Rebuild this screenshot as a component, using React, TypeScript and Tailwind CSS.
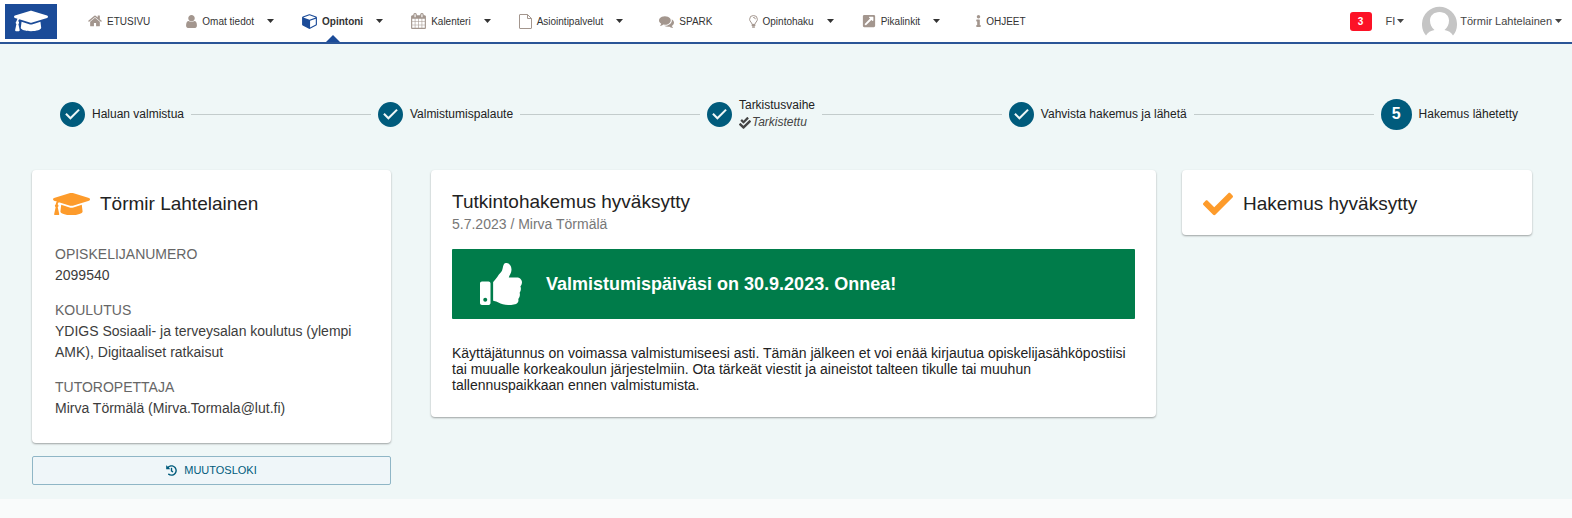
import type { ReactNode } from 'react';
import clsx from 'clsx';
import {
  FaCheck,
  FaCheckDouble,
  FaExternalLinkSquareAlt,
  FaGraduationCap,
  FaHistory,
  FaInfo,
  FaThumbsUp
} from 'react-icons/fa';

type NavItem = {
  label: string;
  icon: ReactNode;
  menu?: boolean;
  active?: boolean;
};

type Step = {
  label: string;
  done: boolean;
  note?: string;
};

const iconPaths = {
  home: 'M1408 992v480q0 26-19 45t-45 19h-384v-384h-256v384h-384q-26 0-45-19t-19-45v-480q0-1 .5-3t.5-3l575-474 575 474q1 2 1 6zm223-69l-62 74q-8 9-21 11h-3q-13 0-21-7l-692-577-692 577q-12 8-24 7-13-2-21-11l-62-74q-8-10-7-23.5t11-21.5l719-599q32-26 76-26t76 26l244 204v-195q0-14 9-23t23-9h192q14 0 23 9t9 23v408l219 182q10 8 11 21.5t-7 23.5z',
  user: 'M1536 1399q0 109-62.5 187t-150.5 78h-854q-88 0-150.5-78t-62.5-187q0-85 8.5-160.5t31.5-152 58.5-131 94-89 134.5-34.5q131 128 313 128t313-128q76 0 134.5 34.5t94 89 58.5 131 31.5 152 8.5 160.5zm-256-887q0 159-112.5 271.5t-271.5 112.5-271.5-112.5-112.5-271.5 112.5-271.5 271.5-112.5 271.5 112.5 112.5 271.5z',
  cube: 'M896 1629l640-349v-636l-640 233v752zm-64-865l698-254-698-254-698 254zm832-252v768q0 35-18 65t-49 47l-704 384q-28 16-61 16t-61-16l-704-384q-31-17-49-47t-18-65v-768q0-40 23-73t61-47l704-256q22-8 44-8t44 8l704 256q38 14 61 47t23 73z',
  calendar:
    'M192 1664h288v-288h-288v288zm352 0h320v-288h-320v288zm-352-352h288v-320h-288v320zm352 0h320v-320h-320v320zm-352-384h288v-288h-288v288zm736 736h320v-288h-320v288zm-384-736h320v-288h-320v288zm768 736h288v-288h-288v288zm-384-352h320v-320h-320v320zm-352-864v-288q0-13-9.5-22.5t-22.5-9.5h-64q-13 0-22.5 9.5t-9.5 22.5v288q0 13 9.5 22.5t22.5 9.5h64q13 0 22.5-9.5t9.5-22.5zm736 864h288v-320h-288v320zm-384-384h320v-288h-320v288zm384 0h288v-288h-288v288zm32-480v-288q0-13-9.5-22.5t-22.5-9.5h-64q-13 0-22.5 9.5t-9.5 22.5v288q0 13 9.5 22.5t22.5 9.5h64q13 0 22.5-9.5t9.5-22.5zm384-64v1280q0 52-38 90t-90 38h-1408q-52 0-90-38t-38-90v-1280q0-52 38-90t90-38h128v-96q0-66 47-113t113-47h64q66 0 113 47t47 113v96h384v-96q0-66 47-113t113-47h64q66 0 113 47t47 113v96h128q52 0 90 38t38 90z',
  comments:
    'M1408 768q0 139-94 257t-256.5 186.5-353.5 68.5q-86 0-176-16-124 88-278 128-36 9-86 16h-3q-11 0-20.5-8t-11.5-21q-1-3-1-6.5t.5-6.5 2-6l2.5-5 3.5-5.5 4-5 4.5-5 4-4.5q5-6 23-25t26-29.5 22.5-29 25-38.5 20.5-44q-124-72-195-177t-71-224q0-139 94-257t256.5-186.5 353.5-68.5 353.5 68.5 256.5 186.5 94 257zm384 256q0 120-71 224.5t-195 176.5q10 24 20.5 44t25 38.5 22.5 29 26 29.5 23 25q1 1 4 4.5t4.5 5 4 5 3.5 5.5l2.5 5 2 6 .5 6.5-1 6.5q-3 14-13 22t-22 7q-50-7-86-16-154-40-278-128-90 16-176 16-271 0-472-132 58 4 88 4 161 0 309-45t264-129q125-92 192-212t67-254q0-77-23-152 129 71 204 178t75 230z'
};

function Glyph({ path, viewBox = '0 0 1792 1792', className }: { path: string; viewBox?: string; className: string }) {
  return (
    <svg aria-hidden viewBox={viewBox} className={className} fill="currentColor">
      <path d={path} />
    </svg>
  );
}

function FileIcon() {
  return (
    <svg aria-hidden viewBox="0 0 13 15" className="h-[15px] w-[13px]" fill="none" stroke="currentColor" strokeLinejoin="round">
      <path d="M1 .5h7.500l4 4v9.500a.5.5 0 0 1-.5.5H1a.5.5 0 0 1-.5-.5V1A.5.5 0 0 1 1 .5ZM8.500.5v4h4" />
    </svg>
  );
}

function BulbIcon() {
  return (
    <svg aria-hidden viewBox="0 0 9 13" className="h-[13px] w-[9px]" fill="none" stroke="currentColor" strokeLinecap="round">
      <path d="M3 9C3 7.500.6 6.600.6 4.300A3.900 3.800 0 0 1 8.400 4.300C8.400 6.600 6 7.500 6 9ZM4.500 2.300q1.600 0 1.800 1.500" />
      <path strokeWidth="1.600" d="M3.300 10.300h2.400M3.700 12h1.600" />
    </svg>
  );
}

function Caret() {
  return (
    <svg aria-hidden viewBox="0 0 7 4" className="h-1 w-[7px]" fill="currentColor">
      <path d="M0 0h7L3.5 4z" />
    </svg>
  );
}

const navItems: NavItem[] = [
  { label: 'ETUSIVU', icon: <Glyph path={iconPaths.home} viewBox="0 200 1664 1400" className="h-3 w-3.5" /> },
  { label: 'Omat tiedot', icon: <Glyph path={iconPaths.user} viewBox="256 128 1280 1536" className="h-[13px] w-[11px]" />, menu: true },
  { label: 'Opintoni', icon: <Glyph path={iconPaths.cube} viewBox="0 0 1664 1792" className="h-4 w-[15px]" />, menu: true, active: true },
  { label: 'Kalenteri', icon: <Glyph path={iconPaths.calendar} viewBox="64 0 1664 1792" className="h-4 w-[15px]" />, menu: true },
  { label: 'Asiointipalvelut', icon: <FileIcon />, menu: true },
  { label: 'SPARK', icon: <Glyph path={iconPaths.comments} viewBox="0 128 1792 1536" className="h-[13px] w-[15px]" /> },
  { label: 'Opintohaku', icon: <BulbIcon />, menu: true },
  { label: 'Pikalinkit', icon: <FaExternalLinkSquareAlt className="size-3.5" />, menu: true },
  { label: 'OHJEET', icon: <FaInfo className="h-3 w-[5px]" /> }
];

const steps: Step[] = [
  { label: 'Haluan valmistua', done: true },
  { label: 'Valmistumispalaute', done: true },
  { label: 'Tarkistusvaihe', done: true, note: 'Tarkistettu' },
  { label: 'Vahvista hakemus ja lähetä', done: true },
  { label: 'Hakemus lähetetty', done: false }
];

const details = [
  { term: 'OPISKELIJANUMERO', value: '2099540' },
  { term: 'KOULUTUS', value: 'YDIGS Sosiaali- ja terveysalan koulutus (ylempi AMK), Digitaaliset ratkaisut' },
  { term: 'TUTOROPETTAJA', value: 'Mirva Törmälä (Mirva.Tormala@lut.fi)' }
];

function Header() {
  return (
    <header className="flex h-11 items-center border-b-2 border-[#2a5597] bg-white pl-[5px] pr-2.5">
      <a href="#" aria-label="Peppi" className="flex h-[35px] w-13 items-center justify-center bg-[#1b4b98] text-white">
        <FaGraduationCap className="h-7 w-[34px]" />
      </a>

      <nav className="ml-[23px] flex h-full items-center gap-7 text-[10px] text-[#333]">
        {navItems.map((item) => (
          <div key={item.label} className={clsx('flex h-full items-center gap-[13px]', !item.menu && 'px-2')}>
            <a
              href="#"
              aria-current={item.active ? 'page' : undefined}
              className={clsx('relative flex h-full items-center gap-[5px] whitespace-nowrap', item.active && 'font-bold')}
            >
              <span className={item.active ? 'text-[#1b4b98]' : 'text-[#a3968e]'}>{item.icon}</span>
              {item.label}
              {item.active && (
                <svg aria-hidden viewBox="0 0 14 7" className="absolute bottom-0 left-1/2 h-[7px] w-3.5 -translate-x-1/2" fill="#1b4b98">
                  <path d="M0 7 7 0l7 7z" />
                </svg>
              )}
            </a>
            {item.menu && (
              <button type="button" aria-label={item.label}>
                <Caret />
              </button>
            )}
          </div>
        ))}
      </nav>

      <div className="ml-auto flex items-center text-[11px] text-[#444]">
        <button type="button" className="h-[19px] w-[22px] rounded-[3px] bg-[#fc1226] text-[10px] font-bold text-white">
          3
        </button>
        <button type="button" className="ml-3.5 flex items-center gap-0.5">
          FI
          <Caret />
        </button>
        <button type="button" className="ml-[18px] flex items-center gap-[3px] whitespace-nowrap">
          <svg aria-hidden viewBox="0 0 35 35" className="size-[35px]">
            <path
              fill="#c5c5c5"
              d="M4 31.5A17.5 17.5 0 1 1 31 31.5C29.500 28.500 26 26.500 22.500 26C25.500 23.500 27 20.500 27 16.500C27 11.500 23 8 17.500 8S8 11.500 8 16.500C8 20.500 9.500 23.500 12.500 26C9 26.500 5.500 28.500 4 31.500Z"
            />
          </svg>
          Törmir Lahtelainen
          <Caret />
        </button>
      </div>
    </header>
  );
}

function Stepper() {
  return (
    <ol className="flex h-9 items-center pl-[60px] pr-[54px] text-xs text-[#222]">
      {steps.map((step, index) => (
        <li key={step.label} className={clsx('flex items-center gap-[7px]', index > 0 && 'flex-auto')}>
          {index > 0 && <span className="ml-[7px] h-px flex-1 bg-[#c3cccc]" />}
          {step.done ? (
            <Glyph
              path="M12 0a12 12 0 1 0 0 24 12 12 0 0 0 0-24zm-2 17l-5-5 1.400-1.400 3.600 3.600 7.600-7.600L19 8l-9 9z"
              viewBox="0 0 24 24"
              className="size-[25px] text-[#005b7c]"
            />
          ) : (
            <span className="flex size-[31px] items-center justify-center rounded-full bg-[#005b7c] text-base font-bold text-white">
              {index + 1}
            </span>
          )}
          <span className="whitespace-nowrap leading-[17px]">
            {step.label}
            {step.note && (
              <span className="flex items-center gap-px italic text-[#444]">
                <FaCheckDouble className="size-3" />
                {step.note}
              </span>
            )}
          </span>
        </li>
      ))}
    </ol>
  );
}

function Card({ className, children }: { className?: string; children: ReactNode }) {
  return (
    <section className={clsx('rounded-sm bg-white shadow-[0_1px_2px_rgba(0,0,0,0.35)]', className)}>{children}</section>
  );
}

export default function App() {
  return (
    <div className="min-h-screen bg-[#f9fbfb] font-['Liberation_Sans',Arial,sans-serif]">
      <Header />

      <main className="bg-[#eff7f7] pb-3.5 pt-[52px]">
        <Stepper />

        <div className="mt-[38px] grid grid-cols-[373fr_725fr_350fr] items-start gap-[26px] pl-8 pr-10">
          <div className="pr-3.5">
            <Card className="px-[21px] pb-6 pt-5">
              <h2 className="flex h-7 items-center gap-2.5 text-[19px] text-[#222]">
                <FaGraduationCap className="h-[30px] w-[37px] text-[#fd9b2b]" />
                Törmir Lahtelainen
              </h2>
              <dl className="mt-[26px] flex flex-col gap-3.5 pl-0.5 text-sm leading-[21px]">
                {details.map((item) => (
                  <div key={item.term}>
                    <dt className="text-[#666]">{item.term}</dt>
                    <dd className="text-[#3c3c3c]">{item.value}</dd>
                  </div>
                ))}
              </dl>
            </Card>
            <button
              type="button"
              className="mt-[13px] flex h-[29px] w-full items-center justify-center gap-[7px] rounded-xs border border-[#8fb6c6] bg-[#eff6f9] text-[11px] text-[#005b7c]"
            >
              <FaHistory className="size-[11px]" />
              MUUTOSLOKI
            </button>
          </div>

          <Card className="px-[21px] pb-6 pt-[19px]">
            <h2 className="text-[19px] leading-[25px] text-[#222]">Tutkintohakemus hyväksytty</h2>
            <p className="text-sm leading-[21px] text-[#777]">5.7.2023 / Mirva Törmälä</p>
            <div className="mt-3.5 flex h-[70px] items-center gap-6 rounded-[1px] bg-[#007c4a] pl-7 text-lg font-bold text-white">
              <FaThumbsUp className="size-[42px]" />
              Valmistumispäiväsi on 30.9.2023. Onnea!
            </div>
            <p className="mt-[26px] text-sm leading-4 text-[#222]">
              Käyttäjätunnus on voimassa valmistumiseesi asti. Tämän jälkeen et voi enää kirjautua opiskelijasähköpostiisi
              tai muualle korkeakoulun järjestelmiin. Ota tärkeät viestit ja aineistot talteen tikulle tai muuhun
              tallennuspaikkaan ennen valmistumista.
            </p>
          </Card>

          <Card className="px-[21px] pb-[17px] pt-5">
            <h2 className="flex h-7 items-center gap-2.5 text-[19px] text-[#222]">
              <FaCheck className="size-[30px] text-[#fd9b2b]" />
              Hakemus hyväksytty
            </h2>
          </Card>
        </div>
      </main>
    </div>
  );
}
